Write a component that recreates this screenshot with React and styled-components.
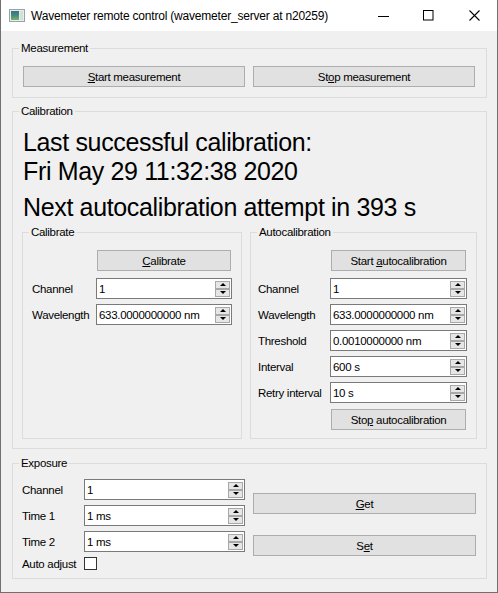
import React from 'react';
import styled, { createGlobalStyle } from 'styled-components';

const Global = createGlobalStyle`
  html, body { margin: 0; padding: 0; background: #ffffff; }
  body {
    font-family: "Liberation Sans", Arial, sans-serif;
    font-size: 11.5px;
    letter-spacing: -0.3px;
    color: #000;
  }
  * { box-sizing: border-box; }
`;

const Window = styled.div`
  width: 498px;
  height: 593px;
  display: flex;
  flex-direction: column;
  background: #f0f0f0;
  border: 1px solid #707070;
  border-top: none;
`;

const TitleBar = styled.div`
  height: 31px;
  flex: none;
  background: #ffffff;
  display: flex;
  align-items: center;
  padding-left: 8px;
`;

const TitleText = styled.div`
  margin-left: 6px;
  font-size: 12px;
  letter-spacing: -0.2px;
  flex: 1;
  white-space: nowrap;
`;

const Controls = styled.div`
  display: flex;
  height: 100%;
`;

const ControlBtn = styled.div`
  width: 46px;
  height: 100%;
  display: flex;
  align-items: center;
  justify-content: center;
  padding-left: ${p => p.$shift || 0}px;
`;

const Content = styled.div`
  flex: 1;
  display: flex;
  flex-direction: column;
  padding: 9px 10px 0 11px;
`;

const Group = styled.fieldset`
  margin: ${p => p.$mt || 0}px 0 0 0;
  padding: 0;
  min-width: 0;
  border: 1px solid #dcdcdc;
`;

const Legend = styled.legend`
  margin-left: 6px;
  padding: 0 2px;
  line-height: 16px;
  height: 16px;
`;

const ButtonRow = styled.div`
  display: flex;
  gap: 8px;
  padding: 10px 11px 10px 10px;
`;

const Button = styled.button`
  height: 21px;
  flex: ${p => (p.$grow ? 1 : 'none')};
  margin: ${p => p.$m || '0'};
  padding: 0 6px;
  background: #e1e1e1;
  border: 1px solid #adadad;
  border-radius: 0;
  font: inherit;
  letter-spacing: inherit;
  color: #000;
  display: flex;
  align-items: center;
  justify-content: center;
  white-space: nowrap;
`;

const ButtonText = styled.span`
  white-space: pre;
`;

const Mn = styled.span`
  text-decoration: underline;
  text-underline-offset: 1px;
`;

const CalibBody = styled.div`
  padding: 0 9px 9px 9px;
`;

const BigBlock = styled.div`
  font-size: 25px;
  letter-spacing: -0.35px;
  line-height: 29px;
  margin-top: ${p => p.$mt}px;
  padding-left: 1px;
`;

const SubGroups = styled.div`
  display: grid;
  grid-template-columns: 220px 1fr;
  column-gap: 8px;
  margin-top: 2px;
`;

const SubBody = styled.div`
  padding: 10px 9px 8px ${p => p.$pl}px;
`;

const Form = styled.div`
  display: grid;
  grid-template-columns: ${p => p.$label}px 1fr;
  row-gap: 5px;
  align-items: center;
`;

const FieldButton = styled(Button)`
  grid-column: 2;
  margin: ${p => p.$m || '0 1px'};
`;

const Label = styled.div`
  white-space: nowrap;
`;

const SpinFrame = styled.div`
  display: flex;
  height: 21px;
  border: 1px solid #7a7a7a;
  background: #ffffff;
`;

const SpinValue = styled.div`
  flex: 1;
  min-width: 0;
  padding-left: 2px;
  display: flex;
  align-items: center;
  white-space: nowrap;
  overflow: hidden;
`;

const SpinButtons = styled.div`
  width: 16px;
  display: flex;
  flex-direction: column;
  justify-content: center;
  padding: 1px 1px 1px 0;
`;

const SpinArrow = styled.div`
  height: 8px;
  border: 1px solid #a8a8a8;
  background: #e6e6e6;
  display: flex;
  align-items: center;
  justify-content: center;
`;

const Tri = styled.div`
  width: 0;
  height: 0;
  border-left: 3px solid transparent;
  border-right: 3px solid transparent;
  ${p => (p.$up ? 'border-bottom: 3px solid #000;' : 'border-top: 3px solid #000;')}
`;

const ExposureBody = styled.div`
  display: flex;
  padding: 8px 10px 8px 9px;
`;

const ExpForm = styled(Form)`
  flex: 1;
`;

const ExpButtons = styled.div`
  width: 223px;
  margin-left: 8px;
  display: flex;
  flex-direction: column;
  justify-content: center;
  gap: 21px;
`;

const CheckBox = styled.div`
  width: 13px;
  height: 13px;
  border: 1px solid #333333;
  background: #ffffff;
`;

function Spin({ value }) {
  return (
    <SpinFrame>
      <SpinValue>{value}</SpinValue>
      <SpinButtons>
        <SpinArrow><Tri $up /></SpinArrow>
        <SpinArrow><Tri /></SpinArrow>
      </SpinButtons>
    </SpinFrame>
  );
}

function AppIcon() {
  return (
    <svg width="16" height="13" viewBox="0 0 16 13">
      <defs>
        <linearGradient id="ig" x1="0" y1="0" x2="0" y2="1">
          <stop offset="0" stopColor="#3d6e8f" />
          <stop offset="0.5" stopColor="#3f8f7a" />
          <stop offset="1" stopColor="#7fb06a" />
        </linearGradient>
      </defs>
      <rect x="0.5" y="0.5" width="15" height="12" fill="#e8ecec" stroke="#9aa3a8" />
      <rect x="2" y="2" width="8" height="9" fill="url(#ig)" />
      <rect x="11" y="2" width="3" height="9" fill="#cfe3d2" />
    </svg>
  );
}

export default function App() {
  return (
    <>
      <Global />
      <Window>
        <TitleBar>
          <AppIcon />
          <TitleText>Wavemeter remote control (wavemeter_server at n20259)</TitleText>
          <Controls>
            <ControlBtn $shift={4}>
              <svg width="12" height="10" viewBox="0 0 12 10">
                <line x1="0" y1="5.5" x2="11" y2="5.5" stroke="#000" strokeWidth="1" />
              </svg>
            </ControlBtn>
            <ControlBtn>
              <svg width="11" height="11" viewBox="0 0 11 11">
                <rect x="0.5" y="0.5" width="9.5" height="9.5" fill="none" stroke="#000" strokeWidth="1" />
              </svg>
            </ControlBtn>
            <ControlBtn>
              <svg width="11" height="11" viewBox="0 0 11 11">
                <path d="M0.5 0.5 L10.5 10.5 M10.5 0.5 L0.5 10.5" stroke="#000" strokeWidth="1.1" fill="none" />
              </svg>
            </ControlBtn>
          </Controls>
        </TitleBar>
        <Content>
          <Group>
            <Legend>Measurement</Legend>
            <ButtonRow>
              <Button $grow><ButtonText><Mn>S</Mn>tart measurement</ButtonText></Button>
              <Button $grow><ButtonText>St<Mn>o</Mn>p measurement</ButtonText></Button>
            </ButtonRow>
          </Group>

          <Group $mt={5}>
            <Legend>Calibration</Legend>
            <CalibBody>
              <BigBlock $mt={9}>
                Last successful calibration:
                <br />
                Fri May 29 11:32:38 2020
              </BigBlock>
              <BigBlock $mt={7}>Next autocalibration attempt in 393 s</BigBlock>
              <SubGroups>
                <Group>
                  <Legend>Calibrate</Legend>
                  <SubBody $pl={9}>
                    <Form $label={64}>
                      <FieldButton $m="0 1px 2px 1px"><ButtonText><Mn>C</Mn>alibrate</ButtonText></FieldButton>
                      <Label>Channel</Label>
                      <Spin value="1" />
                      <Label>Wavelength</Label>
                      <Spin value="633.0000000000 nm" />
                    </Form>
                  </SubBody>
                </Group>
                <Group>
                  <Legend>Autocalibration</Legend>
                  <SubBody $pl={7}>
                    <Form $label={72}>
                      <FieldButton $m="0 1px 2px 1px"><ButtonText>Start <Mn>a</Mn>utocalibration</ButtonText></FieldButton>
                      <Label>Channel</Label>
                      <Spin value="1" />
                      <Label>Wavelength</Label>
                      <Spin value="633.0000000000 nm" />
                      <Label>Threshold</Label>
                      <Spin value="0.0010000000 nm" />
                      <Label>Interval</Label>
                      <Spin value="600 s" />
                      <Label>Retry interval</Label>
                      <Spin value="10 s" />
                      <FieldButton $m="1px 1px 0 1px"><ButtonText>Sto<Mn>p</Mn> autocalibration</ButtonText></FieldButton>
                    </Form>
                  </SubBody>
                </Group>
              </SubGroups>
            </CalibBody>
          </Group>

          <Group $mt={6}>
            <Legend>Exposure</Legend>
            <ExposureBody>
              <ExpForm $label={62}>
                <Label>Channel</Label>
                <Spin value="1" />
                <Label>Time 1</Label>
                <Spin value="1 ms" />
                <Label>Time 2</Label>
                <Spin value="1 ms" />
                <Label>Auto adjust</Label>
                <CheckBox />
              </ExpForm>
              <ExpButtons>
                <Button><ButtonText><Mn>G</Mn>et</ButtonText></Button>
                <Button><ButtonText>S<Mn>e</Mn>t</ButtonText></Button>
              </ExpButtons>
            </ExposureBody>
          </Group>
        </Content>
      </Window>
    </>
  );
}
